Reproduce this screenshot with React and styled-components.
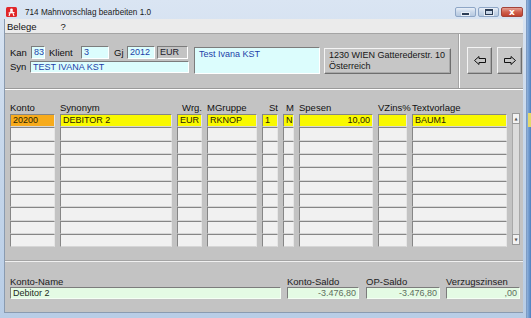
import React from 'react'
import styled, {createGlobalStyle, css} from 'styled-components'

const Global = createGlobalStyle`
html, body {
    margin: 0;
    padding: 0;
    background: #5f8fc6;
}
body {
    font-family: "Liberation Sans", Arial, sans-serif;
    font-size: 9px;
    color: #111;
}
`

const columns = [
    {key: 'konto', title: 'Konto', w: 45},
    {key: 'syn', title: 'Synonym', w: 112},
    {key: 'wrg', title: 'Wrg.', w: 25, headAlign: 'right'},
    {key: 'mg', title: 'MGruppe', w: 50},
    {key: 'st', title: 'St', w: 16, headAlign: 'right'},
    {key: 'm', title: 'M', w: 11, headAlign: 'right'},
    {key: 'sp', title: 'Spesen', w: 74, align: 'right'},
    {key: 'vz', title: 'VZins%', w: 29},
    {key: 'tx', title: 'Textvorlage', w: 95},
]

const firstRow = ['20200', 'DEBITOR 2', 'EUR', 'RKNOP', '1', 'N', '10,00', '', 'BAUM1']
const ROWS = 10

const sums = [
    {label: 'Konto-Name', value: 'Debitor 2', w: 271, gap: 0},
    {label: 'Konto-Saldo', value: '-3.476,80', w: 72, gap: 6, num: true},
    {label: 'OP-Saldo', value: '-3.476,80', w: 74, gap: 7, num: true},
    {label: 'Verzugszinsen', value: ',00', w: 74, gap: 6, num: true},
]

function Arrow({dir}) {
    const pts = dir === 'left'
        ? '0.5,4.5 5,0.5 5,2.5 11.5,2.5 11.5,6.5 5,6.5 5,8.5'
        : '11.5,4.5 7,0.5 7,2.5 0.5,2.5 0.5,6.5 7,6.5 7,8.5'
    return (
        <svg width="12" height="9" viewBox="0 0 12 9">
            <polygon points={pts} fill="none" stroke="#111" strokeWidth="1"/>
        </svg>
    )
}

export default function App() {
    return (
        <Screen>
            <Global/>
            <Window>
                <TitleBar>
                    <AppIcon>
                        <svg width="11" height="10" viewBox="0 0 11 10">
                            <rect x="0" y="0" width="11" height="10" rx="1.5" fill="#e0262a"/>
                            <circle cx="5.5" cy="3" r="1.4" fill="#fff"/>
                            <path d="M3 9 L4.5 4.8 L6.5 4.8 L8 9 M2.5 6 L8.5 5.5" stroke="#fff" strokeWidth="1.1" fill="none"/>
                        </svg>
                    </AppIcon>
                    <TitleText>714 Mahnvorschlag bearbeiten 1.0</TitleText>
                    <CaptionButtons>
                        <CaptionButton>
                            <MinGlyph/>
                        </CaptionButton>
                        <CaptionButton>
                            <MaxGlyph/>
                        </CaptionButton>
                        <CaptionButton close>
                            <CloseGlyph>x</CloseGlyph>
                        </CaptionButton>
                    </CaptionButtons>
                </TitleBar>
                <Client>
                    <MenuBar>
                        <MenuItem>Belege</MenuItem>
                        <MenuItem>?</MenuItem>
                    </MenuBar>

                    <TopPanel>
                        <HeaderGroup>
                            <FieldRow>
                                <Label w={21}>Kan</Label>
                                <Field w={14} h={13}>83</Field>
                                <Label w={32} gap={4}>Klient</Label>
                                <Field w={28} h={13}>3</Field>
                                <Label w={13} gap={5}>Gj</Label>
                                <Field w={28} h={13}>2012</Field>
                                <Field w={31} h={13} gap={2} tone="grey">EUR</Field>
                            </FieldRow>
                            <FieldRow>
                                <Label w={20}>Syn</Label>
                                <Field w={159} h={12}>TEST IVANA KST</Field>
                            </FieldRow>
                        </HeaderGroup>
                        <InfoBox>Test Ivana KST</InfoBox>
                        <AddressBox>
                            <span>1230 WIEN Gatterederstr. 10</span>
                            <span>Österreich</span>
                        </AddressBox>
                        <Divider/>
                        <NavButton><Arrow dir="left"/></NavButton>
                        <NavButton gap={5}><Arrow dir="right"/></NavButton>
                    </TopPanel>

                    <GridArea>
                        <Grid>
                            {columns.map(c => (
                                <HeadCell key={c.key} align={c.headAlign}>{c.title}</HeadCell>
                            ))}
                            <HeadCell/>
                            <ScrollBar>
                                <ScrollArrow>▲</ScrollArrow>
                                <ScrollArrow>▼</ScrollArrow>
                            </ScrollBar>
                            {Array.from({length: ROWS}).map((_, r) =>
                                columns.map((c, i) => (
                                    <Cell
                                        key={r + c.key}
                                        col={i + 1}
                                        align={c.align}
                                        tone={r === 0 ? (i === 0 ? 'orange' : 'yellow') : 'empty'}
                                    >
                                        {r === 0 ? firstRow[i] : ''}
                                    </Cell>
                                ))
                            )}
                        </Grid>
                    </GridArea>

                    <BottomArea>
                        {sums.map(s => (
                            <SumColumn key={s.label} w={s.w} gap={s.gap}>
                                <SumLabel>{s.label}</SumLabel>
                                <SumField num={s.num}>{s.value}</SumField>
                            </SumColumn>
                        ))}
                    </BottomArea>
                </Client>
            </Window>
            <BehindStrip>
                <BehindMark/>
            </BehindStrip>
        </Screen>
    )
}

const Screen = styled.div`
display: flex;
width: 531px;
height: 318px;
overflow: hidden;
`

const Window = styled.div`
width: 527px;
height: 318px;
flex: none;
display: flex;
flex-direction: column;
box-sizing: border-box;
background: linear-gradient(180deg, #dae5f3 0%, #c9d9ec 40%, #b8cde6 100%);
border-right: 1px solid #7e9cc4;
`

const TitleBar = styled.div`
height: 19px;
flex: none;
display: flex;
align-items: flex-end;
padding: 0 3px 1px 6px;
box-sizing: border-box;
`

const AppIcon = styled.div`
width: 11px;
height: 10px;
margin-bottom: 1px;
display: flex;
`

const TitleText = styled.div`
margin-left: 8px;
font-family: "Liberation Sans", Arial, sans-serif;
font-size: 8.2px;
line-height: 11px;
color: #1a1a1a;
`

const CaptionButtons = styled.div`
margin-left: auto;
display: flex;
gap: 2px;
margin-bottom: 1px;
`

const CaptionButton = styled.div`
width: ${p => p.close ? 22 : 21}px;
height: 10px;
box-sizing: border-box;
border: 1px solid #8ea6c6;
border-radius: 2px;
display: flex;
align-items: center;
justify-content: center;
background: linear-gradient(180deg, #e8eff8 0%, #c9d7e9 50%, #b7c9e0 100%);
${p => p.close && css`
    border-color: #a3433a;
    background: linear-gradient(180deg, #e5a296 0%, #d0614f 50%, #c0412e 100%);
`}
`

const MinGlyph = styled.div`
width: 7px;
height: 2px;
margin-top: 3px;
background: #2b3c55;
border: 1px solid #e8eef6;
`

const MaxGlyph = styled.div`
width: 6px;
height: 3px;
border: 1px solid #2b3c55;
border-top-width: 2px;
box-shadow: 0 0 0 1px #e8eef6;
`

const CloseGlyph = styled.span`
color: #fff;
font-weight: bold;
font-size: 9px;
line-height: 8px;
font-family: "DejaVu Sans", sans-serif;
`

const Client = styled.div`
flex: 1;
margin: 0 3px 5px 4px;
background: #c3c3c3;
display: flex;
flex-direction: column;
border-left: 1px solid #8a9bb0;
border-bottom: 1px solid #8a9bb0;
`

const MenuBar = styled.div`
height: 14px;
flex: none;
display: flex;
align-items: center;
padding-left: 2px;
background: #ebebeb;
font-size: 9.5px;
`

const MenuItem = styled.span`
margin-right: 24px;
color: #111;
`

const TopPanel = styled.div`
height: 57px;
flex: none;
box-sizing: border-box;
display: flex;
align-items: flex-start;
border-top: 1px solid #a4a4a4;
border-bottom: 1px solid #ffffff;
box-shadow: inset 0 -1px 0 #9a9a9a;
`

const HeaderGroup = styled.div`
margin: 12px 0 0 5px;
display: flex;
flex-direction: column;
gap: 2px;
`

const FieldRow = styled.div`
display: flex;
align-items: center;
`

const Label = styled.span`
width: ${p => p.w}px;
margin-left: ${p => p.gap || 0}px;
font-size: 9.5px;
line-height: 12px;
white-space: nowrap;
`

const sunken = css`
box-sizing: border-box;
border-top: 1px solid #7c7c7c;
border-left: 1px solid #7c7c7c;
border-bottom: 1px solid #ffffff;
border-right: 1px solid #ffffff;
`

const Field = styled.div`
${sunken};
width: ${p => p.w}px;
height: ${p => p.h}px;
margin-left: ${p => p.gap || 0}px;
padding-left: 2px;
font-size: 9px;
line-height: ${p => p.h - 2}px;
white-space: nowrap;
overflow: hidden;
background: ${p => p.tone === 'grey' ? '#c3c3c3' : '#dcfdfd'};
color: ${p => p.tone === 'grey' ? '#1a1a2a' : '#1d3fa8'};
`

const InfoBox = styled.div`
${sunken};
margin: 13px 0 0 5px;
width: 126px;
height: 27px;
padding: 1px 4px;
background: #dcfdfd;
color: #1d3fa8;
font-size: 9px;
line-height: 11px;
`

const raised = css`
box-sizing: border-box;
border-top: 1px solid #f4f4f4;
border-left: 1px solid #f4f4f4;
border-bottom: 1px solid #6e6e6e;
border-right: 1px solid #6e6e6e;
box-shadow: inset -1px -1px 0 #a8a8a8;
`

const AddressBox = styled.div`
${raised};
margin: 14px 0 0 4px;
width: 127px;
height: 26px;
padding: 1px 4px;
display: flex;
flex-direction: column;
font-size: 9px;
line-height: 11px;
background: #c6c6c6;
color: #161616;
white-space: nowrap;
`

const Divider = styled.div`
align-self: stretch;
width: 1px;
margin: 0 7px 1px 7px;
background: #a4a4a4;
border-right: 1px solid #fff;
`

const NavButton = styled.div`
${raised};
margin: 13px 0 0 ${p => p.gap || 0}px;
width: 25px;
height: 27px;
display: flex;
align-items: center;
justify-content: center;
background: #c6c6c6;
`

const GridArea = styled.div`
height: 170px;
flex: none;
box-sizing: border-box;
padding: 11px 0 0 5px;
`

const Grid = styled.div`
display: grid;
grid-template-columns: ${columns.map(c => c.w + 'px').join(' ')} 8px;
grid-template-rows: 13px repeat(${ROWS}, 13.333px);
column-gap: 5px;
`

const HeadCell = styled.div`
font-size: 9.5px;
line-height: 13px;
white-space: nowrap;
text-align: ${p => p.align || 'left'};
`

const toneBg = {orange: '#f7ab1c', yellow: '#f9f900', empty: '#f1f1f1'}

const Cell = styled.div`
grid-column: ${p => p.col};
box-sizing: border-box;
border-top: 1px solid #868686;
border-left: 1px solid #868686;
border-bottom: 1px solid #d6d6d6;
border-right: 1px solid #e6e6e6;
background: ${p => toneBg[p.tone]};
padding: 0 2px 0 2px;
font-size: 9px;
line-height: 11px;
white-space: nowrap;
overflow: hidden;
text-align: ${p => p.align || 'left'};
color: #2a2400;
`

const ScrollBar = styled.div`
grid-column: 10;
grid-row: 2 / span ${ROWS};
height: 132px;
margin-top: -1px;
box-sizing: border-box;
border: 1px solid #a9a9a9;
background: #dcdcdc;
display: flex;
flex-direction: column;
justify-content: space-between;
`

const ScrollArrow = styled.div`
height: 9px;
background: #f2f2f2;
border: 1px solid #9a9a9a;
margin: -1px;
font-size: 4px;
line-height: 9px;
text-align: center;
color: #555;
font-family: "DejaVu Sans", sans-serif;
`

const BottomArea = styled.div`
flex: 1;
display: flex;
align-items: flex-start;
box-sizing: border-box;
padding: 15px 0 0 5px;
border-top: 1px solid #a4a4a4;
box-shadow: inset 0 1px 0 #f0f0f0;
`

const SumColumn = styled.div`
width: ${p => p.w}px;
margin-left: ${p => p.gap}px;
display: flex;
flex-direction: column;
`

const SumLabel = styled.span`
font-size: 9.5px;
line-height: 11px;
color: #1c1c1c;
`

const SumField = styled.div`
${sunken};
height: 12px;
border-bottom-color: #f4fff4;
border-right-color: #f4fff4;
background: #e4fbe4;
padding: 0 2px;
font-size: 9px;
line-height: 10px;
text-align: ${p => p.num ? 'right' : 'left'};
color: ${p => p.num ? '#5e6e5e' : '#1c2a1c'};
`

const BehindStrip = styled.div`
flex: 1;
background: linear-gradient(90deg, #8fb2dc 0%, #4d7fbf 100%);
position: relative;
`

const BehindMark = styled.div`
position: absolute;
top: 113px;
left: 1px;
width: 3px;
height: 14px;
background: #e4d96a;
`
